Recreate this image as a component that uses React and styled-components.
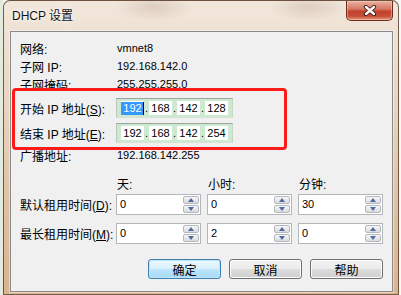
import styled, { createGlobalStyle } from 'styled-components';

const GlobalStyle = createGlobalStyle`
  html, body {
    margin: 0;
    padding: 0;
    background: #eef2ec;
  }
  body {
    font-family: 'Liberation Sans', 'Noto Sans CJK SC', sans-serif;
    font-size: 12px;
    color: #000;
  }
`;

const Screen = styled.div`
  width: 401px;
  height: 295px;
  overflow: hidden;
  padding-left: 3px;
  box-sizing: border-box;
  background: linear-gradient(90deg, #e2ebdd 0 3px, #f7f7f5 3px);
`;

const Window = styled.div`
  width: 396px;
  height: 295px;
  box-sizing: border-box;
  display: flex;
  flex-direction: column;
  border: 1px solid rgba(70, 50, 35, 0.75);
  border-radius: 7px 7px 0 0;
  padding: 0 5px 2px 6px;
  background:
    radial-gradient(ellipse 40px 14px at 150px 6px, rgba(150, 120, 100, 0.22), transparent),
    radial-gradient(ellipse 40px 14px at 305px 6px, rgba(150, 120, 100, 0.22), transparent),
    linear-gradient(180deg, #f2e7dc 0%, #ead7c4 30%, #dfc0a2 70%, #dab38f 100%);
`;

const TitleBar = styled.div`
  height: 30px;
  display: flex;
  justify-content: space-between;
  align-items: flex-start;
`;

const Title = styled.div`
  padding: 8px 0 0 2px;
  line-height: 14px;
  font-size: 12px;
  color: #111;
  text-shadow: 0 0 5px rgba(255, 255, 255, 0.95), 0 0 2px rgba(255, 255, 255, 0.9);
`;

const CloseButton = styled.div`
  width: 47px;
  height: 20px;
  box-sizing: border-box;
  display: flex;
  align-items: center;
  justify-content: center;
  border: 1px solid #6a2b20;
  border-top: none;
  border-radius: 0 0 5px 5px;
  background: linear-gradient(180deg, #eab0a0 0%, #d77c68 40%, #c2432d 55%, #c64f38 80%, #e39a7c 100%);
  box-shadow: inset 0 0 0 1px rgba(255, 220, 200, 0.45);
`;

const Client = styled.div`
  position: relative;
  height: 261px;
  box-sizing: border-box;
  border: 1px solid #8a8a8a;
  background: #f0f0f0;
  padding: 7px 9px 0 9px;
  box-shadow: 0 0 0 1px rgba(255, 255, 255, 0.45);
`;

const Row = styled.div`
  display: grid;
  grid-template-columns: 96px auto;
  align-items: center;
  height: ${(p) => p.$h || 18}px;
  margin-top: ${(p) => p.$mt || 0}px;
`;

const Label = styled.span`
  font-size: 12px;
  white-space: nowrap;
`;

const Key = styled.u`
  text-underline-offset: 1px;
`;

const Value = styled.span`
  font-size: 11px;
  padding-left: 1px;
`;

const IpBox = styled.div`
  width: 117px;
  height: 20px;
  box-sizing: border-box;
  display: flex;
  align-items: center;
  padding: 0 4px;
  border: 1px solid;
  border-color: #9da39d #c9d6c9 #d6e2d6 #bcc8bc;
  background: #cde9cf;
`;

const Octet = styled.div`
  width: 23px;
  height: 14px;
  background: #fff;
  display: flex;
  align-items: center;
  justify-content: center;
  font-size: 11px;
`;

const Selected = styled.span`
  background: #3399ff;
  color: #fff;
  padding: 0 1px 0 2px;
  line-height: 13px;
  border-right: 1px solid #000;
`;

const Dot = styled.div`
  width: 5px;
  text-align: center;
  font-size: 11px;
  line-height: 14px;
`;

const LeaseGrid = styled.div`
  display: grid;
  grid-template-columns: 90px 85px 85px 85px;
  column-gap: 6px;
  align-items: center;
  height: ${(p) => p.$h}px;
  margin-top: ${(p) => p.$mt || 0}px;
`;

const ColHead = styled.span`
  font-size: 12px;
  padding-left: 1px;
`;

const Spinner = styled.div`
  display: flex;
  height: 21px;
  box-sizing: border-box;
  border: 1px solid #b3b6bb;
  background: #fff;
`;

const SpinValue = styled.div`
  flex: 1;
  padding-left: 3px;
  font-size: 11px;
  line-height: 19px;
`;

const SpinCol = styled.div`
  width: 16px;
  display: flex;
  flex-direction: column;
  gap: 1px;
  padding: 1px 1px 1px 0;
`;

const SpinBtn = styled.div`
  flex: 1;
  display: flex;
  align-items: center;
  justify-content: center;
  border: 1px solid #b4b8be;
  border-radius: 2px;
  background: linear-gradient(180deg, #f7f7f7 0%, #e8e8e8 50%, #dadada 100%);
`;

const Arrow = styled.div`
  width: 0;
  height: 0;
  border-left: 3.5px solid transparent;
  border-right: 3.5px solid transparent;
  ${(p) =>
    p.$dir === 'up'
      ? 'border-bottom: 4px solid #4c69a8;'
      : 'border-top: 4px solid #4c69a8;'}
`;

const ButtonBar = styled.div`
  display: flex;
  justify-content: flex-end;
  gap: 8px;
  margin-top: 15px;
`;

const DialogButton = styled.div`
  width: 73px;
  height: 20px;
  box-sizing: border-box;
  display: flex;
  align-items: center;
  justify-content: center;
  font-size: 12px;
  border-radius: 3px;
  border: 1px solid ${(p) => (p.$primary ? '#3c7fb1' : '#707070')};
  background: ${(p) =>
    p.$primary
      ? 'linear-gradient(180deg, #eaf6fd 0%, #d9f0fc 50%, #bee6fd 50%, #a7d9f5 100%)'
      : 'linear-gradient(180deg, #f2f2f2 0%, #ebebeb 50%, #dddddd 50%, #cfcfcf 100%)'};
  box-shadow: inset 0 0 0 1px ${(p) => (p.$primary ? '#c2e4f6' : '#fcfcfc')};
`;

const Highlight = styled.div`
  position: absolute;
  left: 1px;
  top: 56px;
  width: 275px;
  height: 62px;
  box-sizing: border-box;
  border: 3px solid #ff1a1a;
  border-radius: 4px;
  pointer-events: none;
`;

function Ip({ parts, selected }) {
  return (
    <IpBox>
      {parts.map((p, i) => (
        <span key={i} style={{ display: 'contents' }}>
          {i > 0 && <Dot>.</Dot>}
          <Octet>{selected && i === 0 ? <Selected>{p}</Selected> : p}</Octet>
        </span>
      ))}
    </IpBox>
  );
}

function Spin({ value }) {
  return (
    <Spinner>
      <SpinValue>{value}</SpinValue>
      <SpinCol>
        <SpinBtn>
          <Arrow $dir="up" />
        </SpinBtn>
        <SpinBtn>
          <Arrow $dir="down" />
        </SpinBtn>
      </SpinCol>
    </Spinner>
  );
}

export default function App() {
  return (
    <>
      <GlobalStyle />
      <Screen>
        <Window>
          <TitleBar>
            <Title>DHCP 设置</Title>
            <CloseButton>
              <svg width="14" height="11" viewBox="0 0 14 11">
                <path d="M3 2 L11 9 M11 2 L3 9" stroke="#3a1510" strokeWidth="4.2" strokeLinecap="round" />
                <path d="M3 2 L11 9 M11 2 L3 9" stroke="#fff" strokeWidth="2.4" strokeLinecap="round" />
              </svg>
            </CloseButton>
          </TitleBar>
          <Client>
            <Row>
              <Label>网络:</Label>
              <Value>vmnet8</Value>
            </Row>
            <Row>
              <Label>子网 IP:</Label>
              <Value>192.168.142.0</Value>
            </Row>
            <Row>
              <Label>子网掩码:</Label>
              <Value>255.255.255.0</Value>
            </Row>
            <Row $h={20} $mt={5}>
              <Label>
                开始 IP 地址(<Key>S</Key>):
              </Label>
              <Ip parts={['192', '168', '142', '128']} selected />
            </Row>
            <Row $h={20} $mt={5}>
              <Label>
                结束 IP 地址(<Key>E</Key>):
              </Label>
              <Ip parts={['192', '168', '142', '254']} />
            </Row>
            <Row $mt={3}>
              <Label>广播地址:</Label>
              <Value>192.168.142.255</Value>
            </Row>

            <LeaseGrid $h={16} $mt={11}>
              <span />
              <ColHead>天:</ColHead>
              <ColHead>小时:</ColHead>
              <ColHead>分钟:</ColHead>
            </LeaseGrid>
            <LeaseGrid $h={21} $mt={3}>
              <Label>
                默认租用时间(<Key>D</Key>):
              </Label>
              <Spin value="0" />
              <Spin value="0" />
              <Spin value="30" />
            </LeaseGrid>
            <LeaseGrid $h={21} $mt={8}>
              <Label>
                最长租用时间(<Key>M</Key>):
              </Label>
              <Spin value="0" />
              <Spin value="2" />
              <Spin value="0" />
            </LeaseGrid>

            <ButtonBar>
              <DialogButton $primary>确定</DialogButton>
              <DialogButton>取消</DialogButton>
              <DialogButton>帮助</DialogButton>
            </ButtonBar>

            <Highlight />
          </Client>
        </Window>
      </Screen>
    </>
  );
}
